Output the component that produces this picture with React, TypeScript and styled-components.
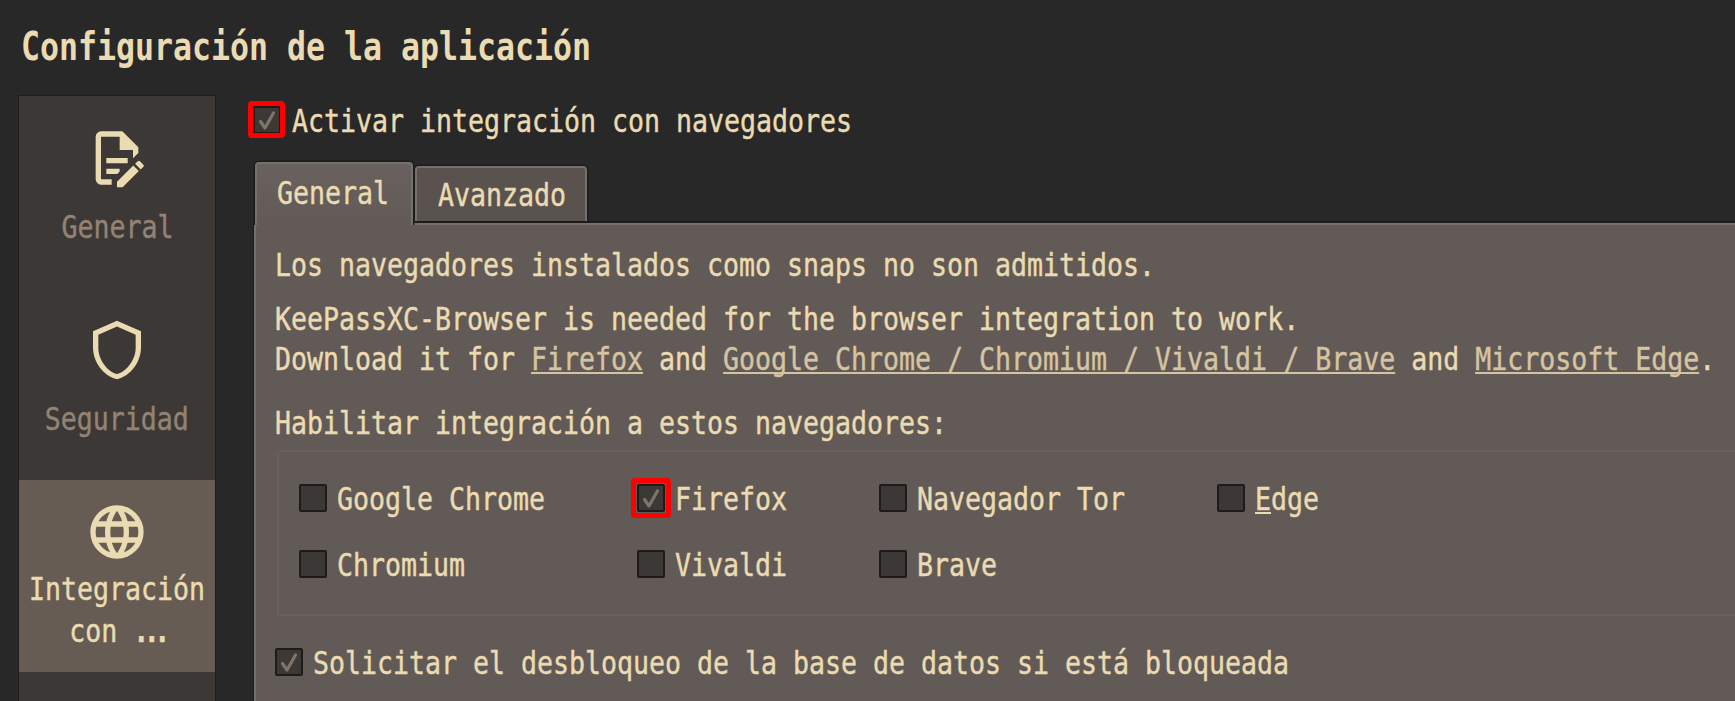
import React from "react";
import styled, { createGlobalStyle, css } from "styled-components";

const cream = "#ebdbb2";
const GLYPH_SCALE = 0.8306;

const GlobalStyle = createGlobalStyle`
  * { box-sizing: border-box; }
  body {
    margin: 0;
    background: #282828;
    color: ${cream};
    font-family: "DejaVu Sans Mono", monospace;
    font-size: 32px;
    line-height: 38px;
    overflow: hidden;
  }
`;

const Window = styled.div`
  width: 100vw;
  height: 701px;
  overflow: hidden;
  display: flex;
  flex-direction: column;
  background: #282828;
`;

const Condensed = styled.span<{ $center?: boolean }>`
  display: block;
  flex: none;
  white-space: pre;
  -webkit-text-stroke: 0.45px currentColor;
  transform: scaleX(${GLYPH_SCALE});
  transform-origin: ${(p) => (p.$center ? "center" : "left")} center;
`;

const Title = styled.h1`
  margin: 0;
  height: 95px;
  padding: 24px 0 0 21px;
  font-size: 38px;
  line-height: 46px;
  font-weight: bold;

  ${Condensed} {
    -webkit-text-stroke: 0;
    transform: scale(${GLYPH_SCALE}, 1.03);
  }
`;

const Body = styled.div`
  flex: 1;
  display: flex;
  min-height: 0;
`;

const Sidebar = styled.nav`
  flex: none;
  width: 198px;
  margin-left: 18px;
  border: 1px solid #1f1f1e;
  border-bottom: 0;
  background: #3c3836;
`;

const Category = styled.div<{ $selected?: boolean }>`
  height: 192px;
  display: flex;
  flex-direction: column;
  align-items: center;
  line-height: 42px;
  text-align: center;
  padding-top: 30px;
  gap: 16px;
  color: #928374;
  ${(p) =>
    p.$selected &&
    css`
      padding-top: 20px;
      gap: 4px;
      color: ${cream};
      background: #665c54;
    `}
`;

const CategoryIcon = styled.svg`
  flex: none;
  width: 64px;
  height: 64px;
  fill: ${cream};
`;

const Dots = styled.span`
  letter-spacing: -6.6px;
  font-weight: bold;
`;

const Page = styled.main`
  flex: 1;
  min-width: 0;
  margin-left: 37px;
  display: flex;
  flex-direction: column;
`;

const CheckRow = styled.label`
  display: flex;
  align-items: center;
  height: 38px;
  gap: 10px;
`;

const Box = styled.span<{ $mark?: string }>`
  position: relative;
  flex: none;
  width: 28px;
  height: 28px;
  margin-bottom: 2px;
  border: 2px solid #1e1b1a;
  border-radius: 2px;
  background: #3c3836;
  display: flex;
  ${(p) =>
    p.$mark &&
    css`
      &::after {
        content: "";
        position: absolute;
        inset: ${p.$mark};
        border: 5px solid #fe0000;
        border-radius: 4px;
      }
    `}
`;

const Tick = styled.svg`
  width: 24px;
  height: 24px;
  fill: none;
  stroke: #7f7468;
  stroke-width: 3.2;
  stroke-linecap: round;
  stroke-linejoin: round;
`;

const Enable = styled.div`
  padding-top: 7px;
  height: 66px;

  ${CheckRow} {
    gap: 11px;
  }
`;

const Tabs = styled.div`
  position: relative;
  z-index: 1;
  display: flex;
  align-items: flex-end;
  height: 62px;
  flex: none;
`;

const Tab = styled.div<{ $active?: boolean }>`
  border: 2px solid #76706c;
  border-bottom: 0;
  border-radius: 4px 4px 0 0;
  box-shadow: 0 0 0 1.5px #1d1c1c;
  clip-path: inset(-2px -2px 0 -2px);
  width: 172px;
  height: 55px;
  margin-left: 2px;
  margin-bottom: 2px;
  padding: 8px 0 0 21px;
  background: #59524e;
  ${(p) =>
    p.$active &&
    css`
      width: 158px;
      height: 63px;
      margin-left: 2px;
      margin-bottom: -2px;
      padding: 10px 0 0 20px;
      background: linear-gradient(#68615e, #625a57);
    `}
`;

const Panel = styled.section`
  flex: 1;
  min-height: 0;
  border: 2px solid #76706c;
  border-right: 0;
  border-bottom: 0;
  box-shadow: 0 -2px 0 #1d1c1c, -1px 0 0 #1d1c1c;
  margin-left: 1px;
  padding: 20px 0 0 19px;
  background: #625a57;
`;

const Paragraph = styled.div<{ $top?: number }>`
  line-height: 40px;
  margin-top: ${(p) => p.$top ?? 0}px;
`;

const Link = styled.a`
  color: #d5c4a1;
  text-decoration: underline;
  text-decoration-thickness: 2px;
  text-underline-offset: 2px;
  text-decoration-skip-ink: none;
`;

const Accel = styled.u`
  text-decoration-thickness: 2px;
  text-underline-offset: 2px;
`;

const Browsers = styled.div`
  margin: 7px -4px 0 2px;
  height: 166px;
  border: 2px solid #67605d;
  border-radius: 3px;
  padding: 28px 0 0 20px;
  display: grid;
  grid-template-columns: 338px 242px 338px 1fr;
  grid-auto-rows: 38px;
  row-gap: 28px;
`;

const Unlock = styled.div`
  margin-top: 28px;
`;

const ICONS = {
  document:
    "M8,12H16V14H8V12M10,20H6V4H13V9H18V12.1L20,10.1V8L14,2H6A2,2 0 0,0 4,4V20A2,2 0 0,0 6,22H10V20M8,18H12.1L13,17.1V16H8V18M20.2,13C20.3,13 20.5,13.1 20.6,13.2L21.9,14.5C22.1,14.7 22.1,15.1 21.9,15.3L20.9,16.3L18.8,14.2L19.8,13.2C19.9,13.1 20,13 20.2,13M20.2,16.9L14.1,23H12V20.9L18.1,14.8L20.2,16.9Z",
  shield:
    "M21,11C21,16.55 17.16,21.74 12,23C6.84,21.74 3,16.55 3,11V5L12,1L21,5V11M12,21C15.75,20 19,15.54 19,11.22V6.3L12,3.18L5,6.3V11.22C5,15.54 8.25,20 12,21Z",
  web: "M16.36,14C16.44,13.34 16.5,12.68 16.5,12C16.5,11.32 16.44,10.66 16.36,10H19.74C19.9,10.64 20,11.31 20,12C20,12.69 19.9,13.36 19.74,14M14.59,19.56C15.19,18.45 15.65,17.25 15.97,16H18.92C17.96,17.65 16.43,18.93 14.59,19.56M14.34,14H9.66C9.56,13.34 9.5,12.68 9.5,12C9.5,11.32 9.56,10.65 9.66,10H14.34C14.43,10.65 14.5,11.32 14.5,12C14.5,12.68 14.43,13.34 14.34,14M12,19.96C11.17,18.76 10.5,17.43 10.09,16H13.91C13.5,17.43 12.83,18.76 12,19.96M8,8H5.08C6.03,6.34 7.57,5.06 9.4,4.44C8.8,5.55 8.35,6.75 8,8M5.08,16H8C8.35,17.25 8.8,18.45 9.4,19.56C7.57,18.93 6.03,17.65 5.08,16M4.26,14C4.1,13.36 4,12.69 4,12C4,11.31 4.1,10.64 4.26,10H7.64C7.56,10.66 7.5,11.32 7.5,12C7.5,12.68 7.56,13.34 7.64,14M12,4.03C12.83,5.23 13.5,6.57 13.91,8H10.09C10.5,6.57 11.17,5.23 12,4.03M18.92,8H15.97C15.65,6.75 15.19,5.55 14.59,4.44C16.43,5.07 17.96,6.34 18.92,8M12,2C6.47,2 2,6.5 2,12A10,10 0 0,0 12,22A10,10 0 0,0 22,12A10,10 0 0,0 12,2Z",
};

function Icon({ name }: { name: keyof typeof ICONS }) {
  return (
    <CategoryIcon viewBox="0 0 24 24">
      <path d={ICONS[name]} />
    </CategoryIcon>
  );
}

interface CheckProps {
  checked?: boolean;
  /** Inset of the red highlight frame around the box. */
  mark?: string;
  children: React.ReactNode;
}

function Check({ checked, mark, children }: CheckProps) {
  return (
    <CheckRow>
      <Box $mark={mark}>
        {checked && (
          <Tick viewBox="0 0 24 24">
            <path d="M5.5 13.5 L10 20 L18.5 5" />
          </Tick>
        )}
      </Box>
      <Condensed>{children}</Condensed>
    </CheckRow>
  );
}

export default function App() {
  return (
    <>
      <GlobalStyle />
      <Window>
        <Title>
          <Condensed>Configuración de la aplicación</Condensed>
        </Title>
        <Body>
          <Sidebar>
            <Category>
              <Icon name="document" />
              <Condensed $center>General</Condensed>
            </Category>
            <Category>
              <Icon name="shield" />
              <Condensed $center>Seguridad</Condensed>
            </Category>
            <Category $selected>
              <Icon name="web" />
              <Condensed $center>
                Integración{"\n"}con <Dots>...</Dots>
              </Condensed>
            </Category>
          </Sidebar>
          <Page>
            <Enable>
              <Check checked mark="-7px -6px -6px -7px">
                Activar integración con navegadores
              </Check>
            </Enable>
            <Tabs>
              <Tab $active>
                <Condensed>General</Condensed>
              </Tab>
              <Tab>
                <Condensed>Avanzado</Condensed>
              </Tab>
            </Tabs>
            <Panel>
              <Paragraph>
                <Condensed>Los navegadores instalados como snaps no son admitidos.</Condensed>
              </Paragraph>
              <Paragraph $top={14}>
                <Condensed>KeePassXC-Browser is needed for the browser integration to work.</Condensed>
                <Condensed>
                  Download it for <Link>Firefox</Link> and{" "}
                  <Link>Google Chrome / Chromium / Vivaldi / Brave</Link> and{" "}
                  <Link>Microsoft Edge</Link>.
                </Condensed>
              </Paragraph>
              <Paragraph $top={24}>
                <Condensed>Habilitar integración a estos navegadores:</Condensed>
              </Paragraph>
              <Browsers>
                <Check>Google Chrome</Check>
                <Check checked mark="-8px">Firefox</Check>
                <Check>Navegador Tor</Check>
                <Check>
                  <Accel>E</Accel>dge
                </Check>
                <Check>Chromium</Check>
                <Check>Vivaldi</Check>
                <Check>Brave</Check>
              </Browsers>
              <Unlock>
                <Check checked>Solicitar el desbloqueo de la base de datos si está bloqueada</Check>
              </Unlock>
            </Panel>
          </Page>
        </Body>
      </Window>
    </>
  );
}
